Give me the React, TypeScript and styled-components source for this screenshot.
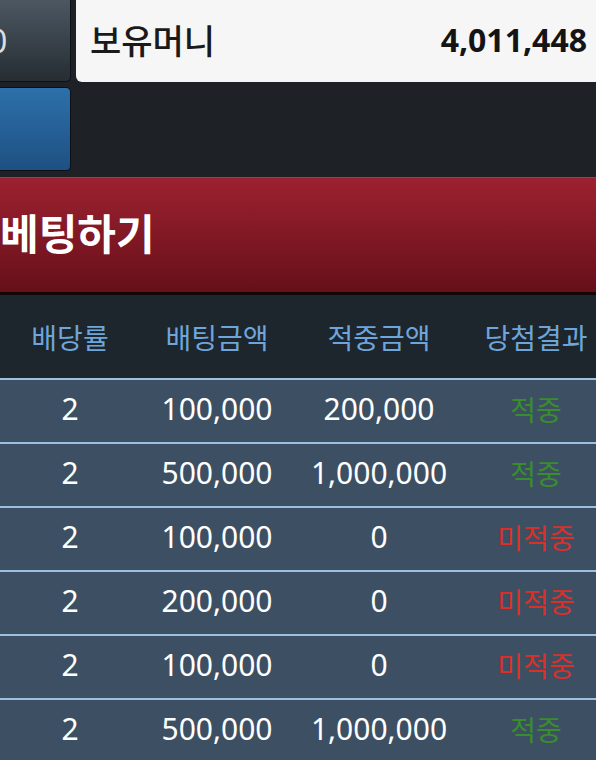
import styled, { createGlobalStyle } from 'styled-components';

const GlobalStyle = createGlobalStyle`
  html, body {
    margin: 0;
    padding: 0;
    background: #1e2227;
  }
  body {
    font-family: 'Noto Sans', 'Noto Sans CJK KR', sans-serif;
    overflow: hidden;
  }
`;

const Page = styled.div`
  width: 596px;
  height: 760px;
  overflow: hidden;
  background: #1e2227;
  display: flex;
  flex-direction: column;
`;

const TopArea = styled.div`
  display: grid;
  grid-template-columns: 71px 1fr;
  grid-template-rows: 82px 84px;
  column-gap: 5px;
  row-gap: 5px;
`;

const SideButton = styled.button<{ $tone: 'dark' | 'blue' }>`
  margin: 0;
  padding: 0;
  display: flex;
  align-items: center;
  justify-content: flex-start;
  overflow: hidden;
  border: 1px solid #0c1117;
  border-left: none;
  border-radius: ${({ $tone }) => ($tone === 'dark' ? '0 0 5px 0' : '0 5px 5px 0')};
  border-top: ${({ $tone }) => ($tone === 'dark' ? 'none' : '1px solid #0c1117')};
  background: ${({ $tone }) =>
    $tone === 'dark'
      ? 'linear-gradient(180deg, #4c5762 0%, #262d33 100%)'
      : 'linear-gradient(180deg, #2d70ab 0%, #1e5082 100%)'};
  color: #d8dde2;
  font-family: 'Noto Sans', 'Noto Sans CJK KR', sans-serif;
  font-size: 32px;
`;

const CutText = styled.span`
  margin-left: -11px;
  line-height: 1;
`;

const MoneyCard = styled.div`
  display: flex;
  align-items: center;
  justify-content: space-between;
  padding: 0 9px 4px 14px;
  background: #f6f6f6;
  border-radius: 0 0 0 6px;
  color: #1a1a1a;
`;

const MoneyLabel = styled.span`
  font-family: 'Noto Sans CJK KR', sans-serif;
  font-size: 34px;
  font-weight: 500;
`;

const MoneyValue = styled.span`
  font-weight: 700;
  font-size: 32px;
  color: #141414;
`;

const BetBanner = styled.button`
  margin: 6px 0 0 0;
  height: 118px;
  flex-shrink: 0;
  padding: 0 0 8px 0;
  display: flex;
  align-items: center;
  border: none;
  border-top: 1px solid #b83a2e;
  border-bottom: 3px solid #120607;
  background: linear-gradient(180deg, #9d2130 0%, #661019 100%);
  color: #ffffff;
  font-family: 'Noto Sans CJK KR', sans-serif;
  font-size: 42px;
  font-weight: 700;
  text-align: left;
`;

const Table = styled.div`
  width: 608px;
  display: flex;
  flex-direction: column;
`;

const HeaderRow = styled.div`
  display: grid;
  grid-template-columns: 140px 154px 170px 144px;
  height: 83px;
  flex-shrink: 0;
  align-items: center;
  background: #1d252d;
  color: #6ea5da;
  font-family: 'Noto Sans CJK KR', sans-serif;
  font-size: 28px;
`;

const BodyRow = styled.div`
  display: grid;
  grid-template-columns: 140px 154px 170px 144px;
  height: 64px;
  flex-shrink: 0;
  padding-bottom: 5px;
  box-sizing: border-box;
  align-items: center;
  background: #3d5063;
  border-top: 2px solid #9cc1df;
  color: #ffffff;
  font-size: 30px;
`;

const Cell = styled.div`
  text-align: center;
  white-space: nowrap;
  line-height: 1;
`;

const ResultCell = styled(Cell)<{ $win: boolean }>`
  font-family: 'Noto Sans CJK KR', sans-serif;
  font-size: 28px;
  color: ${({ $win }) => ($win ? '#3a8d2c' : '#d8302b')};
`;

const rows = [
  { rate: '2', bet: '100,000', hit: '200,000', win: true },
  { rate: '2', bet: '500,000', hit: '1,000,000', win: true },
  { rate: '2', bet: '100,000', hit: '0', win: false },
  { rate: '2', bet: '200,000', hit: '0', win: false },
  { rate: '2', bet: '100,000', hit: '0', win: false },
  { rate: '2', bet: '500,000', hit: '1,000,000', win: true },
];

export default function App() {
  return (
    <>
      <GlobalStyle />
      <Page>
        <TopArea>
          <SideButton $tone="dark">
            <CutText>0</CutText>
          </SideButton>
          <MoneyCard>
            <MoneyLabel>보유머니</MoneyLabel>
            <MoneyValue>4,011,448</MoneyValue>
          </MoneyCard>
          <SideButton $tone="blue" />
          <div />
        </TopArea>
        <BetBanner>베팅하기</BetBanner>
        <Table>
          <HeaderRow>
            <Cell>배당률</Cell>
            <Cell>배팅금액</Cell>
            <Cell>적중금액</Cell>
            <Cell>당첨결과</Cell>
          </HeaderRow>
          {rows.map((row, i) => (
            <BodyRow key={i}>
              <Cell>{row.rate}</Cell>
              <Cell>{row.bet}</Cell>
              <Cell>{row.hit}</Cell>
              <ResultCell $win={row.win}>{row.win ? '적중' : '미적중'}</ResultCell>
            </BodyRow>
          ))}
        </Table>
      </Page>
    </>
  );
}
